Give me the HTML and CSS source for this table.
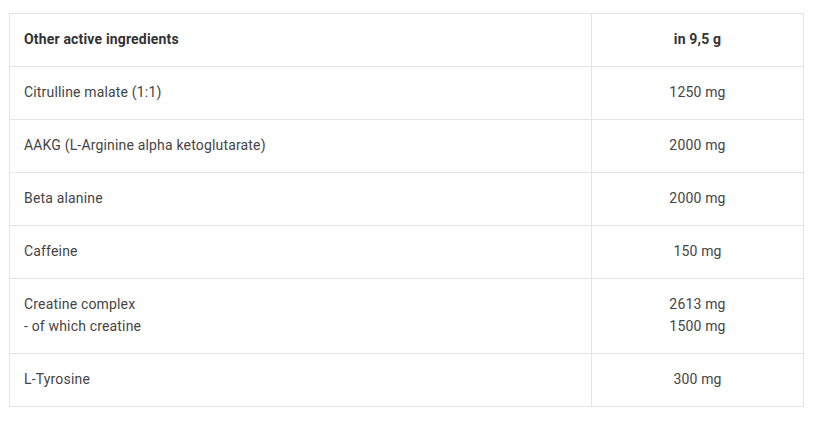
FILE: index.html
```html
<!DOCTYPE html>
<html>
<head>
<meta charset="utf-8">
<link rel="stylesheet" href="styles.css">
</head>
<body>
<table class="nutri">
  <thead>
    <tr><th class="name">Other active ingredients</th><th class="val">in 9,5 g</th></tr>
  </thead>
  <tbody>
    <tr><td class="name">Citrulline malate (1:1)</td><td class="val">1250 mg</td></tr>
    <tr><td class="name">AAKG (L-Arginine alpha ketoglutarate)</td><td class="val">2000 mg</td></tr>
    <tr><td class="name">Beta alanine</td><td class="val">2000 mg</td></tr>
    <tr><td class="name">Caffeine</td><td class="val">150 mg</td></tr>
    <tr><td class="name">Creatine complex<br>- of which creatine</td><td class="val">2613 mg<br>1500 mg</td></tr>
    <tr><td class="name">L-Tyrosine</td><td class="val">300 mg</td></tr>
  </tbody>
</table>
</body>
</html>
```
FILE: styles.css
```css
html, body { margin: 0; padding: 0; background: #fff; }
body { font-family: Roboto, "Noto Sans", sans-serif; font-size: 14px; color: #454545; letter-spacing: 0.17px; }
.nutri {
  margin: 13px 0 0 9px;
  width: 795px;
  border-collapse: collapse;
  table-layout: fixed;
}
.nutri th, .nutri td {
  border: 1px solid #e4e4e4;
  padding: 14px 14px 16px;
  line-height: 22px;
  vertical-align: top;
}
.nutri th { font-weight: 700; color: #333; }
.nutri .name { width: 553px; text-align: left; }
.nutri .val { text-align: center; }
```
